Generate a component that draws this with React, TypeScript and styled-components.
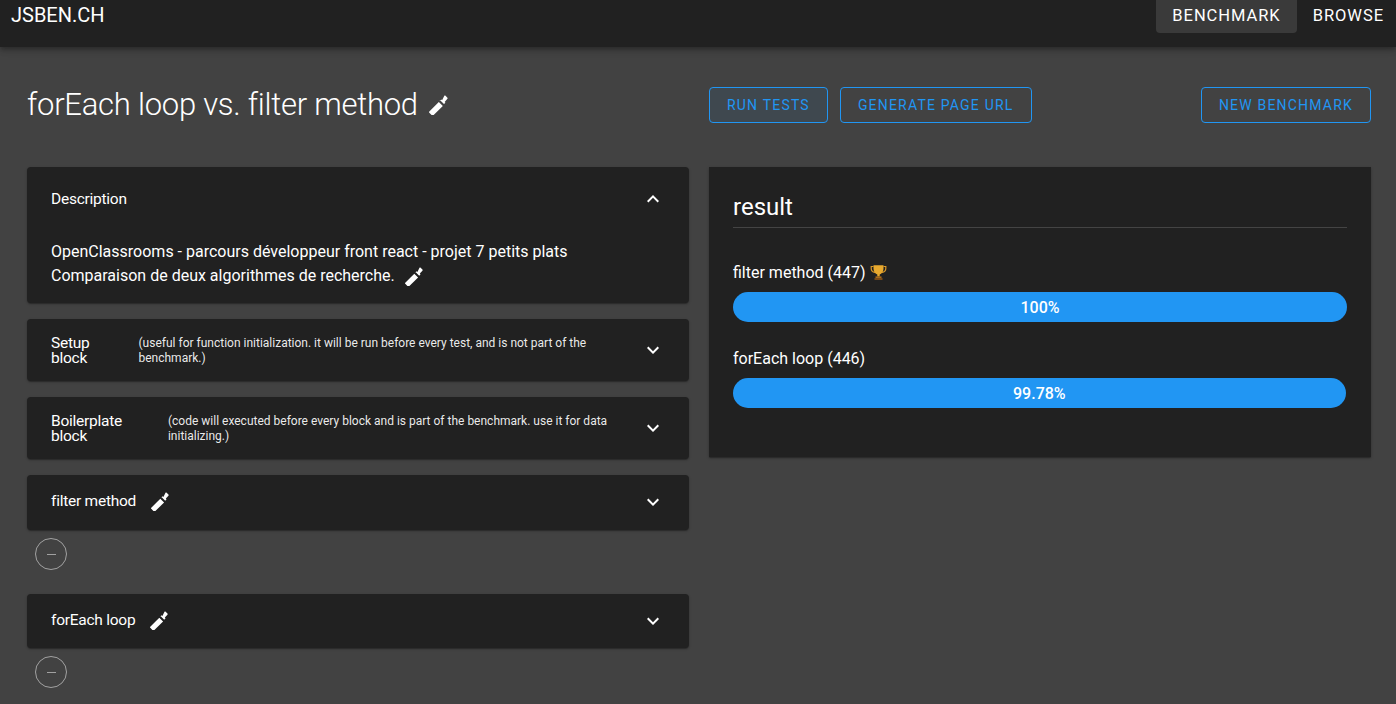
import styled, { createGlobalStyle } from 'styled-components'

const GlobalStyle = createGlobalStyle`
  html, body {
    margin: 0;
    height: 704px;
    overflow: hidden;
    background: #424242;
    font-family: Roboto, sans-serif;
    color: #fff;
  }
  * {
    box-sizing: border-box;
  }
`
const Header = styled.header`
  height: 47px;
  padding: 0 0 0 11px;
  display: flex;
  align-items: flex-start;
  justify-content: space-between;
  background: #212121;
  box-shadow: 0 2px 4px -1px rgba(0, 0, 0, 0.2), 0 4px 5px 0 rgba(0, 0, 0, 0.14),
    0 1px 10px 0 rgba(0, 0, 0, 0.12);
`
const Logo = styled.div`
  font-size: 20px;
  line-height: 30px;
`
const Nav = styled.nav`
  display: flex;
`
const NavLink = styled.a<{ $active?: boolean }>`
  height: 33px;
  padding: 0 16px 3px;
  margin-right: ${({ $active }) => ($active ? '0' : '-4px')};
  display: flex;
  align-items: center;
  font-size: 16.5px;
  letter-spacing: 0.95px;
  border-radius: 0 0 4px 4px;
  background: ${({ $active }) => ($active ? '#3a3a3a' : 'transparent')};
`
const Main = styled.main`
  padding: 40px 25px 0 27px;
`
const TitleRow = styled.div`
  height: 36px;
  display: grid;
  grid-template-columns: 662px 1fr;
  column-gap: 20px;
  align-items: center;
`
const TitleGroup = styled.div`
  display: flex;
  align-items: center;
  gap: 10px;
`
const Title = styled.h1`
  margin: 0;
  font-size: 31px;
  font-weight: 300;
  line-height: 36px;
  letter-spacing: -0.25px;
`
const Actions = styled.div`
  display: flex;
  gap: 12px;
`
const ActionButton = styled.button<{ $pushed?: boolean; $hover?: boolean }>`
  height: 36px;
  padding: 0 17px;
  margin-left: ${({ $pushed }) => ($pushed ? 'auto' : '0')};
  font-family: Roboto, sans-serif;
  font-size: 14px;
  font-weight: 400;
  letter-spacing: 1.2px;
  color: #2196f3;
  background: ${({ $hover }) => ($hover ? 'rgba(33, 150, 243, 0.08)' : 'transparent')};
  border: 1px solid #2196f3;
  border-radius: 4px;
`
const Columns = styled.div`
  margin-top: 44px;
  display: grid;
  grid-template-columns: 662px 1fr;
  column-gap: 20px;
  align-items: start;
`
const LeftColumn = styled.div`
  display: flex;
  flex-direction: column;
`
const Panel = styled.section<{ $gap?: number; $height: number }>`
  height: ${({ $height }) => $height}px;
  margin-bottom: ${({ $gap }) => $gap ?? 16}px;
  background: #212121;
  border-radius: 4px;
  box-shadow: 0 1px 3px 0 rgba(0, 0, 0, 0.2), 0 1px 1px 0 rgba(0, 0, 0, 0.14),
    0 2px 1px -1px rgba(0, 0, 0, 0.12);
`
const PanelHead = styled.div<{ $height: number }>`
  height: ${({ $height }) => $height}px;
  padding: 0 24px;
  display: flex;
  align-items: center;
`
const PanelName = styled.div`
  font-size: 15.5px;
  line-height: 15px;
  letter-spacing: -0.25px;
`
const BlockName = styled(PanelName)<{ $gap: number }>`
  flex: none;
  margin-right: ${({ $gap }) => $gap}px;
  padding-top: 1px;
`
const Hint = styled.div`
  flex: 1;
  padding: 2px 24px 0 0;
  font-size: 12px;
  line-height: 15px;
  color: rgba(255, 255, 255, 0.92);
`
const Chevron = styled.svg`
  width: 24px;
  height: 24px;
  margin-left: auto;
  flex: none;
  fill: #fff;
`
const PanelBody = styled.div`
  padding: 9px 24px 0;
  font-size: 16px;
  line-height: 24px;
`
const PencilIcon = styled.svg<{ $size: number; $left?: number }>`
  width: ${({ $size }) => $size}px;
  height: ${({ $size }) => $size}px;
  margin-left: ${({ $left }) => $left ?? 0}px;
  flex: none;
  fill: #fff;
  vertical-align: middle;
`
const RemoveButton = styled.div`
  width: 32px;
  height: 32px;
  margin: 0 0 24px 8px;
  display: flex;
  align-items: center;
  justify-content: center;
  border: 1px solid rgba(255, 255, 255, 0.5);
  border-radius: 50%;

  &::before {
    content: '';
    width: 9px;
    height: 1px;
    background: rgba(255, 255, 255, 0.5);
  }
`
const ResultCard = styled.section`
  height: 290px;
  padding: 24px;
  background: #212121;
  box-shadow: 0 1px 3px 0 rgba(0, 0, 0, 0.2), 0 1px 1px 0 rgba(0, 0, 0, 0.14),
    0 2px 1px -1px rgba(0, 0, 0, 0.12);
`
const ResultTitle = styled.h2`
  margin: 0 0 32px;
  height: 37px;
  font-size: 24px;
  font-weight: 400;
  line-height: 32px;
  border-bottom: 1px solid rgba(255, 255, 255, 0.16);
`
const ResultLabel = styled.div`
  height: 24px;
  display: flex;
  align-items: center;
  gap: 4px;
  font-size: 16px;
`
const BarTrack = styled.div`
  height: 30px;
  margin: 8px 0 24px;
`
const Bar = styled.div`
  height: 100%;
  display: flex;
  align-items: center;
  justify-content: center;
  font-size: 16px;
  font-weight: 500;
  background: #2196f3;
  border-radius: 15px;
`

const Pencil = ({ size, left }: { size: number; left?: number }) => (
  <PencilIcon $size={size} $left={left} viewBox="0 0 24 24">
    <path d="M1.6 19.8 13 8.400l4.800 4.800L6.400 24.400c-.5.5-1.200.5-1.700 0l-3.100-3.100c-.5-.5-.5-1 0-1.500z" />
    <path d="M14.300 7.100l1.700-1.700.9.900L19.600.9c.4-.4 1-.4 1.400 0l2.300 2.300c.4.400.4 1 0 1.400l-3.300 3.700.9.900-1.700 1.700-5-4.800z" />
  </PencilIcon>
)

const ChevronDown = () => (
  <Chevron viewBox="0 0 24 24">
    <path d="M7.41 8.59 12 13.17l4.59-4.58L18 10l-6 6-6-6z" />
  </Chevron>
)

const ChevronUp = () => (
  <Chevron viewBox="0 0 24 24">
    <path d="M7.41 15.41 12 10.83l4.59 4.58L18 14l-6-6-6 6z" />
  </Chevron>
)

const Trophy = () => (
  <svg width="17" height="17" viewBox="0 0 17 17">
    <path
      d="M3.5 2.5H1.2v2c0 2.2 1.6 3.600 3.800 3.800M13.500 2.500h2.300v2c0 2.200-1.600 3.600-3.800 3.800"
      fill="none"
      stroke="#d9982a"
      strokeWidth="1.2"
    />
    <path d="M3.500 1.200h10v3.600c0 3-2 5-3.800 5.600v2.200h-2.400v-2.200C5.500 9.800 3.500 7.800 3.500 4.800z" fill="#e8a92e" />
    <rect x="5.500" y="12.400" width="6" height="1.600" fill="#a86a1a" />
    <rect x="4.500" y="14" width="8" height="2" fill="#7a4a16" />
  </svg>
)

const App = () => {
  return (
    <>
      <GlobalStyle />
      <Header>
        <Logo>JSBEN.CH</Logo>
        <Nav>
          <NavLink $active>BENCHMARK</NavLink>
          <NavLink>BROWSE</NavLink>
        </Nav>
      </Header>
      <Main>
        <TitleRow>
          <TitleGroup>
            <Title>forEach loop vs. filter method</Title>
            <Pencil size={20} />
          </TitleGroup>
          <Actions>
            <ActionButton $hover>RUN TESTS</ActionButton>
            <ActionButton>GENERATE PAGE URL</ActionButton>
            <ActionButton $pushed>NEW BENCHMARK</ActionButton>
          </Actions>
        </TitleRow>
        <Columns>
          <LeftColumn>
            <Panel $height={136}>
              <PanelHead $height={64}>
                <PanelName>Description</PanelName>
                <ChevronUp />
              </PanelHead>
              <PanelBody>
                OpenClassrooms - parcours développeur front react - projet 7 petits plats
                <br />
                Comparaison de deux algorithmes de recherche.
                <Pencil size={19} left={9} />
              </PanelBody>
            </Panel>
            <Panel $height={62}>
              <PanelHead $height={62}>
                <BlockName $gap={49}>
                  Setup
                  <br />
                  block
                </BlockName>
                <Hint>
                  (useful for function initialization. it will be run before every test, and is not
                  part of the benchmark.)
                </Hint>
                <ChevronDown />
              </PanelHead>
            </Panel>
            <Panel $height={62}>
              <PanelHead $height={62}>
                <BlockName $gap={46}>
                  Boilerplate
                  <br />
                  block
                </BlockName>
                <Hint>
                  (code will executed before every block and is part of the benchmark. use it for
                  data initializing.)
                </Hint>
                <ChevronDown />
              </PanelHead>
            </Panel>
            <Panel $height={55} $gap={8}>
              <PanelHead $height={53}>
                <PanelName>filter method</PanelName>
                <Pencil size={19} left={14} />
                <ChevronDown />
              </PanelHead>
            </Panel>
            <RemoveButton />
            <Panel $height={54} $gap={8}>
              <PanelHead $height={53}>
                <PanelName>forEach loop</PanelName>
                <Pencil size={19} left={14} />
                <ChevronDown />
              </PanelHead>
            </Panel>
            <RemoveButton />
          </LeftColumn>
          <ResultCard>
            <ResultTitle>result</ResultTitle>
            <ResultLabel>
              filter method (447) <Trophy />
            </ResultLabel>
            <BarTrack>
              <Bar style={{ width: '100%' }}>100%</Bar>
            </BarTrack>
            <ResultLabel>forEach loop (446)</ResultLabel>
            <BarTrack>
              <Bar style={{ width: '99.78%' }}>99.78%</Bar>
            </BarTrack>
          </ResultCard>
        </Columns>
      </Main>
    </>
  )
}

export default App
